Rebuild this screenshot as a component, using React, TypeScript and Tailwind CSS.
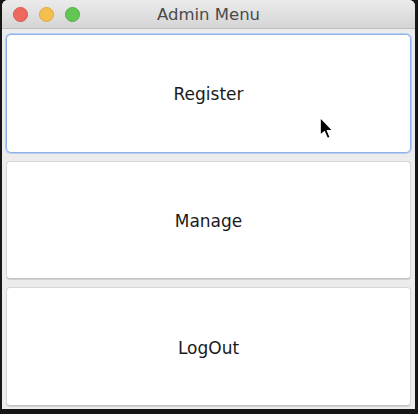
import React from "react";

const font = { fontFamily: '"DejaVu Sans", "Liberation Sans", sans-serif' };

function Cursor() {
  return (
    <svg
      className="absolute left-[318px] top-[116px]"
      width="17"
      height="26"
      viewBox="0 0 16 24"
    >
      <path
        d="M2 1 L2 18 L6 14.5 L8.8 21 L11.5 19.8 L8.8 13.5 L14 13.5 Z"
        fill="#000"
        stroke="#fff"
        strokeWidth="1.3"
        strokeLinejoin="round"
      />
    </svg>
  );
}

function MenuButton({ label, focused }: { label: string; focused?: boolean }) {
  return (
    <div
      className={
        focused
          ? "flex items-center justify-center rounded-[5px] bg-white border border-[#8fb3e6] shadow-[0_0_0_1px_#b7cff0]"
          : "flex items-center justify-center rounded-[4px] bg-white border border-[#d6d6d6] border-b-[#c4c4c4] shadow-[0_1px_0_#d0d0d0]"
      }
    >
      <span className="text-[17px] leading-none pt-[3px] text-[#1a1a1a]" style={font}>
        {label}
      </span>
    </div>
  );
}

export default function App() {
  return (
    <div className="relative w-[418px] h-[414px] bg-[#161616] overflow-hidden">
      <div className="absolute left-[2px] top-0 w-[413px] h-[409px] flex flex-col rounded-t-[6px] overflow-hidden bg-[#ececec]">
        <div className="relative h-[29px] shrink-0 flex items-center bg-gradient-to-b from-[#ebebeb] to-[#d5d5d5] border-b border-[#bdbdbd]">
          <div className="flex items-center gap-[11px] pl-[11px] pt-[1px]">
            <div className="w-[15px] h-[15px] rounded-full bg-[#ee6a5e] border border-[#d9574c]" />
            <div className="w-[15px] h-[15px] rounded-full bg-[#f5bf4f] border border-[#dca83f]" />
            <div className="w-[15px] h-[15px] rounded-full bg-[#62c554] border border-[#52ae45]" />
          </div>
          <div
            className="absolute inset-0 flex items-center justify-center pt-[3px] text-[16.5px] leading-none text-[#4a4a4a]"
            style={font}
          >
            Admin Menu
          </div>
        </div>
        <div className="flex-1 grid grid-rows-3 gap-[8px] pt-[5px] pb-[3px] px-[4px]">
          <MenuButton label="Register" focused />
          <MenuButton label="Manage" />
          <MenuButton label="LogOut" />
        </div>
      </div>
      <Cursor />
    </div>
  );
}
